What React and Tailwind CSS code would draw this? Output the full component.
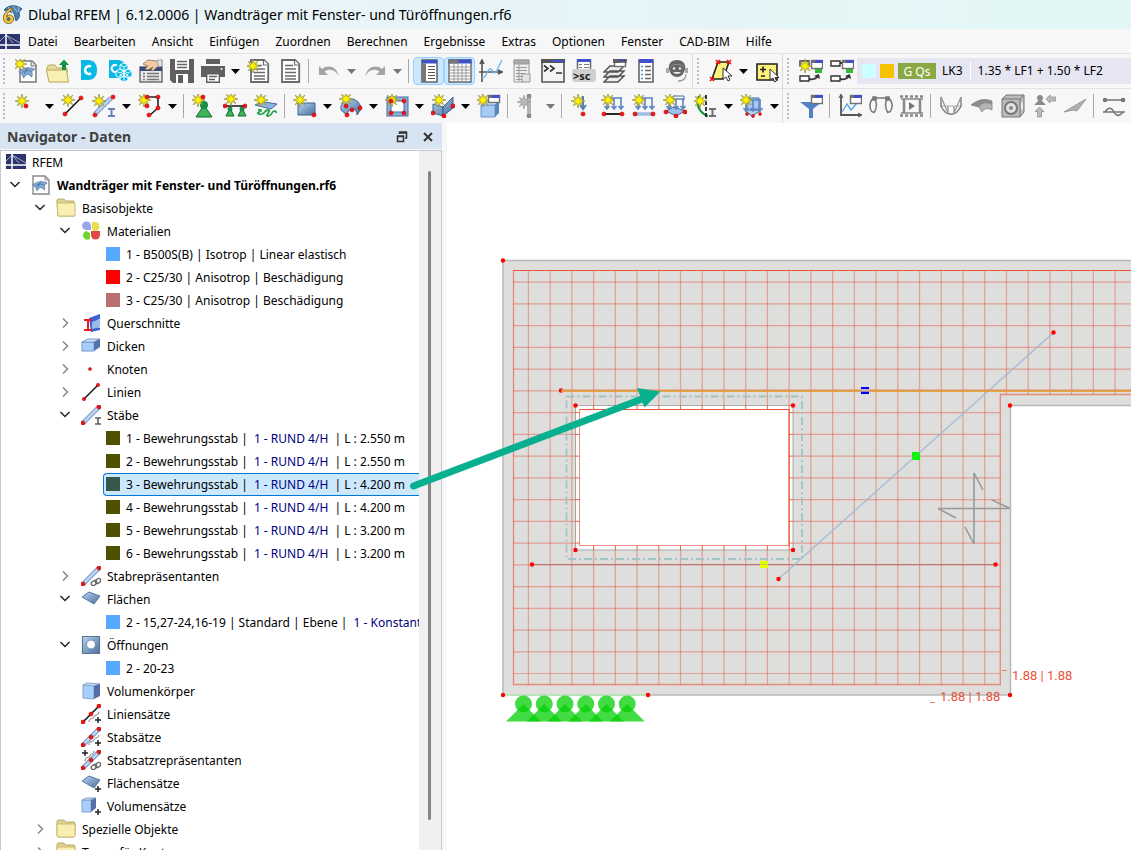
import { useState } from 'react'

const STAR = 'M0-7L1.2-2.4 4.8-4.8 2.5-1.2 7 0 2.5 1.2 4.8 4.8 1.2 2.4 0 7-1.2 2.4-4.8 4.8-2.5 1.2-7 0-2.5-1.2-4.8-4.8-1.2-2.4Z'

function Star({ x = 6, y = 6, off }) {
  return <path d={STAR} transform={`translate(${x} ${y})`} fill={off ? '#b8b8b8' : '#fff000'} stroke={off ? '#999' : '#8f8b45'} strokeWidth="0.7" />
}

function Dot({ x, y, r = 2.1, off }) {
  return <circle cx={x} cy={y} r={r} fill={off ? '#8a8a8a' : '#f01414'} stroke={off ? '#777' : '#b40000'} strokeWidth="0.5" />
}

// small window with a blue caption bar
function Win({ x = 11, y = 0, w = 12, h = 9, bar = '#4050c8' }) {
  return (
    <g>
      <rect x={x + 0.5} y={y + 0.5} width={w - 1} height={h - 1} fill="#fff" stroke="#707070" strokeWidth="1.4" />
      <rect x={x} y={y} width={w} height="3" fill={bar} />
      <path d={`M${x} ${y}h4v3h-4z`} fill="#707070" />
    </g>
  )
}

function Page() {
  return (
    <g fill="#fff" stroke="#6a6a6a" strokeWidth="1.8">
      <path d="M4 1H17l4.200 4.200V23H4z" />
      <path d="M7 6.500h8M7 10h11M7 13.500h11M7 17h11M7 20h11" strokeWidth="1.400" />
      <path d="M16.500 1v5h5" strokeWidth="1.200" />
    </g>
  )
}

function DownArrows({ y = 4, bottom = 15 }) {
  return (
    <g fill="none" stroke="#5a86c2" strokeWidth="1.6">
      <path d={`M5 ${y}H21M6 ${y}V${bottom}M13 ${y}V${bottom}M20 ${y}V${bottom}`} />
      <path d={`M3.500 ${bottom - 3}L6 ${bottom}l2.500-3M10.500 ${bottom - 3}L13 ${bottom}l2.500-3M17.500 ${bottom - 3}L20 ${bottom}l2.500-3`} />
    </g>
  )
}

function Shell({ sx = 0, sy = 0 }) {
  return (
    <g transform={`translate(${sx} ${sy})`}>
      <path d="M1 7C6 2 14 1 21 4l-4 3c1 2 1 4 0 7-2-3-4-4-7-3l-3 4-2-5z" fill="#86acd6" stroke="#4d75a8" />
      <path d="M5 8c4-3 8-3 12-1M12 2L8 10" fill="none" stroke="#3f6597" />
    </g>
  )
}

const bridge = (
  <g>
    <rect width="20" height="15" fill="#2c3470" />
    <path d="M0 7L6 1l14 8M6 1l7 8" fill="none" stroke="#c5c8de" strokeWidth="0.800" />
    <path d="M6 0v15M0 11h20" fill="none" stroke="#fff" strokeWidth="1.500" />
  </g>
)

const link = (
  <g fill="none" stroke="#606060" strokeWidth="1.300">
    <rect x="9" y="14" width="6" height="4" rx="2" transform="rotate(-35 12 16)" />
    <rect x="13" y="12" width="6" height="4" rx="2" transform="rotate(-35 16 14)" />
  </g>
)

const bar = (
  <g>
    <path d="M2 18L18 2" stroke="#5b7fb5" strokeWidth="4.500" />
    <path d="M2 18L18 2" stroke="#b9d4f5" strokeWidth="2.800" />
  </g>
)

const ICONS = {
  newModel: <g><path d="M5 2h12l4 4v17H5z" fill="#fff" stroke="#777" strokeWidth="1.500" /><path d="M16 2v5h5" fill="#ddd" stroke="#777" /><g transform="translate(3 7) scale(.8)"><Shell /></g><Star x={5} y={5} /></g>,
  open: <g><path d="M1 8l2-2h6l2 3h10v4H1z" fill="#e8dd98" stroke="#b5a95a" /><path d="M0.500 11h20l2 12H3z" fill="#f8efb5" stroke="#b5a95a" /><path d="M16 11V6h-3l5-5.500 5 5.500h-3v5z" fill="#129447" /></g>,
  cCloud: <g><path d="M4 1h7c6 0 9 4 9 10s-3 10-9 10H4z" fill="#08b8e6" /><path d="M14 7.500a4 4 0 1 0 0 7" fill="none" stroke="#fff" strokeWidth="2.600" /></g>,
  cubes: <g><path d="M1 1h9c5 0 8 4 8 9s-3 9-8 9H1z" fill="#08b8e6" /><path d="M9 6.500a3.500 3.500 0 1 0 0 6" fill="none" stroke="#fff" strokeWidth="2" /><g fill="#08b8e6" stroke="#fff" strokeWidth="0.900"><path d="M16 4l4 2v4l-4 2-4-2V6zM12 10l4 2v5l-4 2-4-2v-5zM20 10l4 2v5l-4 2-4-2v-5zM16 14l4 2v5l-4 2-4-2v-5z" /><path d="M12 6l4 2 4-2M16 8v4M8 12l4 2 4-2 4 2 4-2M12 16l4 2 4-2M16 18v5" fill="none" /></g></g>,
  hand: <g><rect x="1" y="8" width="22" height="15" fill="#e9e9e9" stroke="#666" strokeWidth="1.400" /><path d="M1 8h22v4H1z" fill="#38487e" /><path d="M4 14.500h2M4 17.500h2M4 20.500h2M8 14.500h12M8 17.500h12M8 20.500h12" stroke="#777" strokeWidth="1.500" /><path d="M4 5l5-4 8 1 6-1v6l-5 1-4 4-2-1 2-3-5 3-3-1 3-3-3-1z" fill="#f3c9a3" stroke="#8c6a50" strokeWidth="0.800" /><path d="M18 1h5v6l-3 1z" fill="#d6e4f5" stroke="#8090a5" strokeWidth="0.600" /></g>,
  save: <g><path d="M0 0h24v24H3l-3-3z" fill="#5f5f5f" /><path d="M5 0h14v11H5zM6 15h12v9H6z" fill="#fff" /><path d="M7 2.500h10M7 5.500h10M7 8.500h10" stroke="#666" strokeWidth="1.400" /><path d="M8 16h5v8H8z" fill="#5f5f5f" /></g>,
  print: <g fill="#5f5f5f"><path d="M5 0h14v5H5zM0 7h24v11h-5v-4H5v4H0z" /><path d="M5.700 14.700h12.600v8.600H5.700z" fill="#fff" stroke="#5f5f5f" strokeWidth="1.400" /><path d="M8 17.500h8M8 20.500h6" stroke="#5f5f5f" strokeWidth="1.400" /><circle cx="20.500" cy="10" r="1" fill="#fff" /></g>,
  newPage: <g><Page /><Star x={6} y={7} /></g>,
  page: <Page />,
  undo: <path d="M2 7v9h9l-3.500-3.500c5-3.500 11-2 14 4.500C20 8 12 5 5 10z" fill="#a3a3a3" />,
  redo: <path d="M22 7v9h-9l3.500-3.500c-5-3.500-11-2-14 4.500C4 8 12 5 19 10z" fill="#a3a3a3" />,
  panelList: <g><path d="M5 1h15v22H5z" fill="#fff" stroke="#666" strokeWidth="1.600" /><path d="M5 1h15v3.500H5z" fill="#3d50c8" /><path d="M5 4.500h4V23H5z" fill="#777" /><path d="M11 7.500h7M11 10.500h7M11 13.500h7M11 16.500h7M11 19.500h7" stroke="#555" strokeWidth="1.200" /></g>,
  table: <g><path d="M1 1h22v22H1z" fill="#fff" stroke="#666" strokeWidth="1.400" /><path d="M0.500 0.500h23v4h-23z" fill="#3d50c8" /><path d="M0.500 0.500h10v4h-10z" fill="#777" /><path d="M1 8h22M1 11h22M1 14h22M1 17h22M1 20h22M6 5v18M10 5v18M14 5v18M18 5v18" stroke="#999" /></g>,
  graph: <g fill="none"><path d="M3 23V2M1 5l2-4 2 4M0 13h23M19 11l4 2-4 2" stroke="#555" strokeWidth="1.600" /><path d="M3 19c5 0 5-9 8-9s3 6 6 3l6-12" stroke="#6fb6ee" strokeWidth="1.300" /></g>,
  doc: <g stroke="#9a9a9a"><path d="M4 1h15v14l-4 8H4z" fill="#eee" /><path d="M4 1h15v4H4z" fill="#aaa" /><path d="M6 8.500h11M6 11.500h11M6 14.500h9M6 17.500h8M6 20.500h6M9 5v17" /><path d="M12 15h8v8h-8z" fill="#e4e4e4" /></g>,
  console: <g><path d="M1 1h22v22H1z" fill="#f4f4f4" stroke="#555" strokeWidth="1.600" /><path d="M0 0h24v4H0z" fill="#555" /><path d="M10 1h13v2H10z" fill="#4050c8" /><path d="M3 6.500l4 3-4 3M9 6.500l4 3-4 3M15 14h6" fill="none" stroke="#333" strokeWidth="1.600" /></g>,
  script: <g><path d="M5.500 1h13v12h-13z" fill="#fff" stroke="#666" strokeWidth="1.500" /><path d="M5 0h14v3H5z" fill="#4050c8" /><path d="M7 5.500h3M12 5.500h5M7 8.500h3M12 8.500h5" stroke="#777" /><rect x="0" y="10" width="24" height="13" rx="3" fill="#cfcfcf" /><text x="1" y="21" fontSize="11" fontWeight="700" fill="#222">&gt;sc</text></g>,
  layers: <g fill="#eee" stroke="#555" strokeWidth="1.500"><path d="M1 23l6-6h14l-6 6zM1 18l6-6h14l-6 6zM1 13l6-6h14l-6 6z" /><Win x={11} y={0} w={12} h={8} /></g>,
  list2: <g><path d="M5 1h14v22H5z" fill="#fff" stroke="#666" strokeWidth="1.600" /><path d="M5 0h14v4H5z" fill="#4050c8" /><path d="M7 7.500h2M7 11.500h2M7 15.500h2M7 19.500h2" stroke="#4b8ad0" strokeWidth="1.600" /><path d="M11 7.500h6M11 11.500h6M11 15.500h6M11 19.500h6" stroke="#666" strokeWidth="1.400" /></g>,
  support: <g><path d="M12 1c6 0 9 4 8 9-1 5-4 8-8 8s-7-3-8-8c-1-5 2-9 8-9z" fill="#666" /><path d="M5 8c3-3 10-4 14 0" fill="none" stroke="#909090" /><circle cx="9" cy="9.500" r="1.200" fill="#eee" /><circle cx="15" cy="9.500" r="1.200" fill="#eee" /><path d="M8 13c2 2.500 6 2.500 8 0z" fill="#eee" /><path d="M2.500 9v5M21.500 9v5" stroke="#aaa" strokeWidth="3" /><path d="M21 15c0 5-3 7-8 7" fill="none" stroke="#999" strokeWidth="1.300" /></g>,
  select: <g><path d="M3 20L9 3h11l-6 17z" fill="#fff07a" stroke="#222" strokeWidth="1.600" /><path d="M1 18l4 4M5 18l-4 4M7 1l4 4M11 1L7 5M18 1l4 4M22 1l-4 4" stroke="#f01414" strokeWidth="1.600" /><path d="M14 9v11l3-2 2 4 2-1-2-4h4z" fill="#fff" stroke="#333" /></g>,
  plusMinus: <g><path d="M2 5h20v16H2z" fill="#fff27a" stroke="#222" strokeWidth="1.600" /><path d="M5 10.500h6M8 7.500v6M6 17h4" stroke="#222" strokeWidth="1.600" /><path d="M15 10v11l3-2 1.500 4 2-1-1.500-3.500h4z" fill="#fff" stroke="#333" /></g>,
  loadNew: <g><path d="M1 2h9v5H1zM1 17h9v5H1z" fill="#fff" stroke="#333" strokeWidth="1.400" /><path d="M10 20c5 1 8-1 9-4" fill="none" stroke="#333" strokeWidth="1.800" /><path d="M15 17l5-2 1 5z" fill="#333" /><path d="M16 10h7v4h-7z" fill="#2dc02d" /><Win x={12} y={1} w={12} h={9} /><Star x={6} y={7} /></g>,
  loadEdit: <g><path d="M1 2h9v5H1zM1 17h9v5H1z" fill="#fff" stroke="#333" strokeWidth="1.400" /><path d="M10 20c5 1 8-1 9-4M10 4h4" fill="none" stroke="#333" strokeWidth="1.800" /><path d="M15 17l5-2 1 5z" fill="#333" /><path d="M16 10h7v4h-7z" fill="#2dc02d" /><Win x={12} y={1} w={12} h={9} /></g>,

  node: <g><Star x={7} y={7} /><Dot x={11} y={12} /></g>,
  line: <g><path d="M4 20L20 4" stroke="#111" strokeWidth="1.600" /><Star x={7} y={6} /><Dot x={4} y={20} /><Dot x={20} y={4} /></g>,
  member: <g><g transform="translate(1 2)">{bar}</g><Star x={7} y={7} /><Dot x={3} y={21} /><Dot x={21} y={3} /><path d="M16 15h7M19.500 15v7M16 22h7" stroke="#6b83b8" strokeWidth="2" /></g>,
  polyline: <g><path d="M8 3h12v11l-8 7" fill="none" stroke="#222" strokeWidth="1.600" /><Star x={6} y={6} /><Dot x={9} y={3} /><Dot x={20} y={3} /><Dot x={20} y={14} /><Dot x={11} y={21} /><Dot x={9} y={12} /></g>,
  nodeSup: <g><path d="M12 11l8 12H4z" fill="#3cb45a" stroke="#126b2d" /><circle cx="12" cy="11" r="4" fill="#189048" /><Star x={6} y={6} /><Dot x={11} y={3} /></g>,
  lineSup: <g><path d="M7 14l4 8H3zM19 14l4 8h-8z" fill="#3cb45a" stroke="#126b2d" /><circle cx="7" cy="15" r="2.500" fill="#189048" /><circle cx="19" cy="15" r="2.500" fill="#189048" /><path d="M3 12h19" stroke="#222" strokeWidth="1.600" /><Star x={8} y={5} /><Dot x={2} y={12} /><Dot x={22} y={12} /></g>,
  surfSup: <g><path d="M1 11l9-3 13 2-6 5z" fill="#8fb3dd" stroke="#44699c" /><path d="M4 16c4-1 4 1 1 2s0 3 3 2 3-4 6-4 0 3-1 5 4 1 5-2 5-2 4 0" fill="none" stroke="#28a04a" strokeWidth="1.800" /><Star x={7} y={6} /></g>,
  surface: <g><path d="M5 9h17v12H5z" fill="url(#blueG)" stroke="#3d628f" /><Star x={7} y={6} /><Dot x={21} y={21} /></g>,
  shell: <g><path d="M2 12C6 3 18 2 22 13v2l-4 6c0-4-2-6-5-6s-4 3-5 6l-6-5z" fill="url(#blueG)" stroke="#3d628f" /><Star x={7} y={5} /><Dot x={7} y={12} /><Dot x={13} y={16} /><Dot x={8} y={21} /><Dot x={21} y={14} /></g>,
  opening: <g><path d="M4 5h17v15H4z" fill="#fff" stroke="#486f9f" strokeWidth="5" /><path d="M4 5h17v15H4z" fill="none" stroke="#8db0d8" strokeWidth="3" /><Star x={7} y={6} /><Dot x={6} y={7} /><Dot x={19} y={7} /><Dot x={6} y={19} /><Dot x={19} y={19} /></g>,
  folded: <g><path d="M2 10l10 3v9L2 19zM12 13L22 3v11l-10 8z" fill="url(#blueG)" stroke="#3d628f" /><Star x={8} y={6} /><Dot x={2} y={19} /><Dot x={13} y={22} /><Dot x={22} y={12} /></g>,
  solid: <g><path d="M4 11h14v12H4z" fill="#a5ccf5" stroke="#6d93c0" /><path d="M4 11l4-4h14l-4 4z" fill="#cde3fa" stroke="#6d93c0" /><path d="M18 11l4-4v12l-4 4z" fill="#5d84b7" /><Star x={6} y={6} /><Win x={11} y={1} w={12} h={8} /></g>,
  rebarOff: <g><path d="M13 2v20" stroke="#b5b5b5" strokeWidth="4" /><Dot off x={13} y={2} /><Dot off x={13} y={22} /><Star x={8} y={8} off /></g>,
  nodalLoad: <g><path d="M13 2v12M10 11l3 4 3-4" fill="none" stroke="#4f7fc0" strokeWidth="2" /><Star x={8} y={7} /><Dot x={13} y={20} /></g>,
  lineLoad: <g><DownArrows /><path d="M3 20h18" stroke="#111" strokeWidth="1.800" /><Star x={7} y={6} /><Dot x={3} y={20} /><Dot x={21} y={20} /></g>,
  memberLoad: <g><DownArrows /><path d="M3 20h18" stroke="#9fbde5" strokeWidth="3.500" /><Star x={7} y={6} /><Dot x={3} y={20} /><Dot x={21} y={20} /></g>,
  surfLoad: <g><path d="M3 17l8-4 11 4-9 5z" fill="#9fc0ea" stroke="#41699b" /><DownArrows y={5} bottom={15} /><path d="M5 5l6-3h10v4" fill="none" stroke="#446da3" /><Star x={7} y={6} /><Dot x={3} y={18} /><Dot x={22} y={18} /><Dot x={13} y={22} /></g>,
  imperf: <g><path d="M5 2c-4 7 0 17 9 20" fill="none" stroke="#129436" strokeWidth="2" /><path d="M12 1v22" stroke="#222" strokeWidth="1.800" strokeDasharray="4 2" /><path d="M15 15h7M18.500 15v7M15 22h7" stroke="#707070" strokeWidth="2" /><Star x={6} y={7} /></g>,
  volLoad: <g><path d="M5 17l7-3 8 3-8 5z" fill="#b5cdea" stroke="#41699b" /><path d="M7 4h12v12H7z" fill="#a9c9ef" stroke="#3f6ba5" /><DownArrows y={6} bottom={17} /><Star x={6} y={6} /><Dot x={7} y={20} r={1.500} /><Dot x={13} y={22} r={1.500} /><Dot x={20} y={20} r={1.500} /></g>,
  filter: <g><path d="M1 8h22l-9 7v9h-4v-9z" fill="#5183c4" /><Win x={12} y={1} w={12} h={9} /></g>,
  diagram: <g><path d="M3 1v20h20" fill="none" stroke="#555" strokeWidth="1.800" /><path d="M4 18l5-8 4 6 6-7" fill="none" stroke="#58a8ea" strokeWidth="1.400" /><path d="M1 4l2-4 2 4M20 19l4 2-4 2" fill="none" stroke="#555" /><Win x={12} y={1} w={12} h={9} /></g>,
  deform: <g fill="none" stroke="#777" strokeWidth="1.500"><path d="M5 4h14M6 5c2 4 2 9-1 14M18 5c-2 4-2 9 1 14M4 4C0 8 0 14 3 18M20 4c4 4 4 10 1 14" /><path d="M4 3h3v3H4zM17 3h3v3h-3zM3 18h3M18 18h3" fill="#777" /></g>,
  film: <g fill="none" stroke="#888"><path d="M1 5h22M1 19h22" strokeWidth="1.300" /><path d="M0 2.500h24M0 21.500h24" strokeWidth="2.500" strokeDasharray="3 2" /><path d="M4 5v14M20 5v14" strokeWidth="2.500" /><path d="M9 8v8l6-4z" fill="#777" stroke="none" /></g>,
  moment: <g><path d="M1 12h22" stroke="#aaa" /><path d="M2 3v9c5 11 15 11 20 0V3" fill="none" stroke="#7d7d7d" strokeWidth="1.400" /><path d="M2 3l7 16M22 3l-7 16M9 12v7M15 12v7" fill="none" stroke="#999" strokeWidth="1.300" /></g>,
  surfRes: <g><path d="M1 11C7 6 14 4 22 7v9c-4-2-8-2-10 2l-3-5z" fill="#b4b4b4" stroke="#999" /><path d="M1 11C7 6 14 4 22 7v4c-6-3-10-2-13 2z" fill="#8c8c8c" /></g>,
  solidRes: <g><path d="M1 5l4-4h18v17l-4 5H1z" fill="#bbb" stroke="#777" /><path d="M1 5h18v18M19 5l4-4" fill="none" stroke="#777" /><circle cx="10" cy="14" r="6" fill="#e3e3e3" stroke="#777" strokeWidth="2" /><circle cx="10" cy="14" r="2" fill="#888" /><ellipse cx="21" cy="12" rx="1" ry="4" fill="#eee" /></g>,
  reaction: <g fill="#8b8b8b"><circle cx="8" cy="4" r="3" /><path d="M8 5l6 6H2z" /><path d="M7.500 13l4.500 4.500H9.500V23h-4v-5.500H3z" fill="#bbb" stroke="#888" strokeWidth="0.700" /><path d="M14 5l4-4v2h6v4h-6v2z" fill="#bbb" stroke="#888" strokeWidth="0.700" /></g>,
  wedge: <path d="M1 18L23 5l-9 12-4-1z" fill="#b0b0b0" stroke="#999" />,
  sections: <g fill="none" stroke="#777" strokeWidth="1.600"><path d="M2 6h20M1 18h22" /><path d="M3 18c4-6 7-4 9 0s5 5 9 0" /><circle cx="3" cy="6" r="1.500" fill="#777" /><circle cx="21" cy="6" r="1.500" fill="#777" /></g>,

  rfem: bridge,
  modelFile: <g><path d="M2 1h12l4 4v14H2z" fill="#fff" stroke="#888" strokeWidth="1.400" /><path d="M14 1v4h4" fill="none" stroke="#888" /><g transform="translate(1 5) scale(.72)"><Shell /></g></g>,
  folderOpen: <g><path d="M1 4V2l1-1h6l1.500 2H18v15H2z" fill="#ddd28e" stroke="#b8ad68" /><path d="M1 5h18v13H2z" fill="#faf0b5" stroke="#c8bc70" /></g>,
  folder: <g><path d="M1 4V2l1-1h6l1.500 2H18l1 1v13l-1 1H2l-1-1z" fill="#ddd28e" stroke="#b8ad68" /><path d="M1 5h18v12l-1 1H2l-1-1z" fill="#f8eeb2" stroke="#c8bc70" /></g>,
  materials: <g><path d="M1 5a4.500 4.500 0 1 1 9 0v4H6a4.500 4.500 0 0 1-5-4z" fill="#9aa5ea" /><path d="M11 1h3a4.500 4.500 0 1 1 0 9c-3 0-3-2-3-4z" fill="#e6e051" /><path d="M5 10a4.500 4.500 0 1 0 4 8V12z" fill="#6bd925" /><path d="M10 10h9v4a4.500 4.500 0 0 1-9 0z" fill="#e34848" /></g>,
  crossSec: <g><path d="M8 5l11-4v5l-3 1v7l3 1v2l-9 2z" fill="#3d60d4" /><path d="M11 9l8-3v8l-8 2z" fill="#99bdea" /><path d="M3 7h8M7 7v10M3 17h8" stroke="#e02020" strokeWidth="2" fill="none" /></g>,
  thickness: <g><path d="M1 6h12v9H1z" fill="#a7cffc" stroke="#7398c8" /><path d="M1 6l6-3h12l-6 3z" fill="#d3e7fc" stroke="#7398c8" /><path d="M13 6l6-3v8l-6 4z" fill="#5374aa" /></g>,
  nodes: <Dot x={9} y={10} r={1.500} />,
  lines: <g><path d="M3 17L17 3" stroke="#111" strokeWidth="1.500" /><Dot x={3} y={17} r={1.700} /><Dot x={17} y={3} r={1.700} /></g>,
  members: <g>{bar}<Dot x={2} y={18} /><Dot x={18} y={2} /><path d="M14 13h6M17 13v6M14 19h6" stroke="#606060" strokeWidth="1.600" /></g>,
  memberRep: <g>{bar}<Dot x={2} y={18} /><Dot x={18} y={2} /><g transform="translate(1 1)">{link}</g></g>,
  surfaces: <path d="M1 8l7-5 11 4-6 8z" fill="url(#blueG)" stroke="#5b7ba6" />,
  openings: <g><path d="M1.500 1.500h17v17h-17z" fill="url(#blueG)" stroke="#63758a" strokeWidth="1.200" /><circle cx="10" cy="9.500" r="4.500" fill="#fff" stroke="#728ba8" /></g>,
  solids: <g><path d="M2 4h11v14l-11-1z" fill="#a7cffc" stroke="#7fa4cf" /><path d="M2 4l4-2 13 1-6 2z" fill="#c9def5" stroke="#7fa4cf" /><path d="M13 5l6-2v12l-6 3z" fill="#566ea8" /></g>,
  lineSets: <g><path d="M2 18L18 2" stroke="#111" strokeWidth="1.600" /><Dot x={2} y={18} /><Dot x={10} y={10} /><Dot x={18} y={2} /><path d="M8 18c0-5 4-2 5-5s4-1 5-5" fill="none" stroke="#777" /><path d="M14 16h6M17 13v6" stroke="#222" strokeWidth="1.500" /></g>,
  memberSets: <g>{bar}<Dot x={2} y={18} /><Dot x={10} y={10} /><Dot x={18} y={2} /><path d="M8 18c0-5 4-2 5-5s4-1 5-5" fill="none" stroke="#777" /><path d="M14 16h6M17 13v6" stroke="#222" strokeWidth="1.500" /></g>,
  memberSetRep: <g>{bar}<Dot x={2} y={18} /><Dot x={10} y={10} /><Dot x={18} y={2} /><path d="M1 3h6M4 0v6" stroke="#222" strokeWidth="1.500" /><path d="M4 11c1-6 5-2 5-5s4-1 4-5" fill="none" stroke="#777" /><g transform="translate(1 1)">{link}</g></g>,
  surfaceSets: <g><path d="M1 8l7-5 11 4-6 8z" fill="url(#blueG)" stroke="#5b7ba6" /><path d="M14 16h6M17 13v6" stroke="#222" strokeWidth="1.500" /></g>,
  solidSets: <g><path d="M1 4h9v12H1z" fill="#a7cffc" stroke="#7fa4cf" /><path d="M1 4l4-2h10l-5 2z" fill="#c9def5" stroke="#7fa4cf" /><path d="M10 4l5-2v10l-5 4z" fill="#566ea8" /><path d="M14 16h6M17 13v6" stroke="#222" strokeWidth="1.500" /></g>,
}

// '|' is a divider, '*' adds the drop-down arrow, '-' greys it, '!' is a pressed button
const ROW1 = [
  ['newModel', 'open', 'cCloud', 'cubes', 'hand', 'save', 'print*', 'newPage', 'page', '|', 'undo*-', 'redo*-', '|', 'panelList!', 'table!', 'graph', 'doc', 'console', 'script', 'layers', 'list2', 'support'],
  ['select*', 'plusMinus'],
  ['loadNew', 'loadEdit'],
]
const ROW2 = [
  ['node*', 'line', 'member*', 'polyline*', '|', 'nodeSup', 'lineSup', 'surfSup', '|', 'surface*', 'shell*', 'opening*', 'folded*', 'solid', '|', 'rebarOff*-', '|', 'nodalLoad', 'lineLoad', 'memberLoad', 'surfLoad', 'imperf*', 'volLoad*'],
  ['filter', '|', 'diagram', 'deform', 'film', '|', 'moment', 'surfRes', 'solidRes', 'reaction', 'wedge', '|', 'sections'],
]

const MENU = ['Datei', 'Bearbeiten', 'Ansicht', 'Einfügen', 'Zuordnen', 'Berechnen', 'Ergebnisse', 'Extras', 'Optionen', 'Fenster', 'CAD-BIM', 'Hilfe']

const bars = ['2.550', '2.550', '4.200', '4.200', '3.200', '3.200']

const TREE = [
  { level: 0, icon: 'modelFile', label: 'Wandträger mit Fenster- und Türöffnungen.rf6', open: true, bold: true },
  { level: 1, icon: 'folderOpen', label: 'Basisobjekte', open: true },
  { level: 2, icon: 'materials', label: 'Materialien', open: true },
  { color: 'bg-[#55aaff]', label: '1 - B500S(B) | Isotrop | Linear elastisch' },
  { color: 'bg-[#ff0000]', label: '2 - C25/30 | Anisotrop | Beschädigung' },
  { color: 'bg-[#b87070]', label: '3 - C25/30 | Anisotrop | Beschädigung' },
  { level: 2, icon: 'crossSec', label: 'Querschnitte', open: false },
  { level: 2, icon: 'thickness', label: 'Dicken', open: false },
  { level: 2, icon: 'nodes', label: 'Knoten', open: false },
  { level: 2, icon: 'lines', label: 'Linien', open: false },
  { level: 2, icon: 'members', label: 'Stäbe', open: true },
  ...bars.map((len, i) => ({ bar: i + 1, color: 'bg-[#4f5000]', label: `${i + 1} - Bewehrungsstab | `, blue: '1 - RUND 4/H', tail: ` | L : ${len} m` })),
  { level: 2, icon: 'memberRep', label: 'Stabrepräsentanten', open: false },
  { level: 2, icon: 'surfaces', label: 'Flächen', open: true },
  { color: 'bg-[#55aaff]', label: '2 - 15,27-24,16-19 | Standard | Ebene | ', blue: '1 - Konstant' },
  { level: 2, icon: 'openings', label: 'Öffnungen', open: true },
  { color: 'bg-[#55aaff]', label: '2 - 20-23' },
  { level: 2, icon: 'solids', label: 'Volumenkörper' },
  { level: 2, icon: 'lineSets', label: 'Liniensätze' },
  { level: 2, icon: 'memberSets', label: 'Stabsätze' },
  { level: 2, icon: 'memberSetRep', label: 'Stabsatzrepräsentanten' },
  { level: 2, icon: 'surfaceSets', label: 'Flächensätze' },
  { level: 2, icon: 'solidSets', label: 'Volumensätze' },
  { level: 1, icon: 'folder', label: 'Spezielle Objekte', open: false },
  { level: 1, icon: 'folder', label: 'Typen für Knoten', open: false },
]

const INDENT = ['pl-0', 'pl-[25px]', 'pl-[50px]']

function ToolGroup({ items }) {
  return (
    <div className="flex h-full shrink-0 items-center">
      <div className="ml-1 mr-[6px] h-[26px] w-0 border-l-2 border-dotted border-[#bdbdbd]" />
      {items.map((item, i) => {
        if (item === '|') return <div key={i} className="ml-[3px] mr-1 h-6 w-px bg-[#a8a8a8]" />
        const name = item.replace(/[*!-]/g, '')
        const active = item.includes('!')
        return (
          <div key={i} className="flex items-center">
            <button aria-label={name} className={`flex h-7 w-[31px] items-center justify-center rounded-sm ${active ? 'border border-[#99d1ff] bg-[#cce8ff]' : ''}`}>
              <svg className="h-6 w-6 shrink-0" viewBox="0 0 24 24">{ICONS[name]}</svg>
            </button>
            {item.includes('*') && (
              <button aria-label={`${name} Menü`} className="flex h-7 w-[15px] items-center justify-center">
                <svg className="h-[5px] w-[9px]" viewBox="0 0 9 5"><path d="M0 0h9L4.500 5z" fill={item.includes('-') ? '#777' : '#000'} /></svg>
              </button>
            )}
          </div>
        )
      })}
    </div>
  )
}

function Chevron({ open }) {
  return (
    <svg className="h-3 w-3" viewBox="0 0 12 12" fill="none" strokeWidth="1.500">
      {open ? <path d="M1.500 3L6 7.500 10.500 3" stroke="#222" /> : <path d="M4 1.500L8.500 6 4 10.500" stroke="#888" />}
    </svg>
  )
}

function TreeRow({ row, selected, onSelect }) {
  if (row.level === undefined) {
    return (
      <li className="h-[23px] pl-[101px]">
        <button
          onClick={onSelect}
          className={`flex h-full w-full items-center whitespace-pre border-y border-l pl-[2px] text-left ${selected ? 'rounded-l-sm border-[#0078d7] bg-[#cce8ff]' : 'border-transparent'}`}
        >
          <span className={`mb-[2px] mr-[6px] h-[14px] w-[14px] shrink-0 ${selected ? 'bg-[#36594b]' : row.color}`} />
          {row.label}
          {row.blue && <span className="mx-[3px] text-[#00007f]">{row.blue}</span>}
          {row.tail}
        </button>
      </li>
    )
  }
  return (
    <li className={`flex h-[23px] items-center ${INDENT[row.level]}`}>
      <button aria-label={`${row.label} auf/zu`} className="flex h-full w-[25px] shrink-0 items-center justify-center pb-[2px]">
        {row.open !== undefined && <Chevron open={row.open} />}
      </button>
      <button className={`flex h-full items-center whitespace-nowrap ${row.bold ? 'font-bold' : ''}`}>
        <span className="flex w-[30px] justify-center pb-[2px] pr-[2px]">
          <svg className="h-5 w-5" viewBox="0 0 20 20">{ICONS[row.icon]}</svg>
        </span>
        {row.label}
      </button>
    </li>
  )
}

function Navigator() {
  const [selected, setSelected] = useState(3)
  return (
    <aside className="flex w-[442px] shrink-0 flex-col">
      <header className="flex h-[26px] shrink-0 items-center bg-[#d7e5f2] pl-[7px] pr-2 pt-px">
        <h2 className="flex-1 text-sm font-bold text-[#404040]">Navigator - Daten</h2>
        <button aria-label="Abdocken" className="mr-[14px]">
          <svg className="h-3 w-3" viewBox="0 0 12 12" fill="none" stroke="#333"><path d="M3.500 3V1h7v6H9M3 2h8" strokeWidth="1.500" /><path d="M1.500 5h6v5.500h-6zM1 5.500h7" strokeWidth="1.500" /></svg>
        </button>
        <button aria-label="Schließen">
          <svg className="h-3 w-3" viewBox="0 0 12 12" stroke="#333" strokeWidth="2"><path d="M2 2l8 8M10 2l-8 8" /></svg>
        </button>
      </header>
      <div className="mt-px flex min-h-0 flex-1 border-x border-t border-[#c6c6d2] bg-white pl-px">
        <ul className="min-w-0 flex-1 overflow-hidden text-xs text-black">
          <li className="flex h-[23px] items-center pl-1">
            <svg className="mb-[2px] h-[15px] w-5" viewBox="0 0 20 15">{ICONS.rfem}</svg>
            <span className="ml-[6px]">RFEM</span>
          </li>
          {TREE.map((row, i) => (
            <TreeRow key={i} row={row} selected={row.bar !== undefined && row.bar === selected} onSelect={() => row.bar && setSelected(row.bar)} />
          ))}
        </ul>
        <div className="flex w-[22px] shrink-0 bg-[#f0f0f0] pb-[30px] pl-[9px] pt-5">
          <div className="w-[3px] rounded-sm bg-[#858585]" />
        </div>
      </div>
    </aside>
  )
}

const gridX = Array.from({ length: 29 }, (_, i) => 528.4 + i * 21.73)
const gridY = Array.from({ length: 19 }, (_, i) => 282.2 + i * 21.74)
const NODES = [
  [503, 260.5], [503, 695], [648, 695], [1010, 695], [1010, 405.5], [1053.5, 332.5], [778.5, 579],
  [532, 564.5], [995.5, 564.5], [575.5, 405.5], [793, 405.5], [575.5, 550], [793, 550], [561, 390.5],
]

function ModelView() {
  return (
    <svg className="h-full w-full" viewBox="447 123 684 727" preserveAspectRatio="xMinYMin slice" fontFamily="Roboto, sans-serif">
      <clipPath id="mesh">
        <path clipRule="evenodd" d="M513 270H1200V395H1000.500V685H513zM575.500 405.500V550H793V405.500z" />
      </clipPath>
      <clipPath id="rim">
        <path clipRule="evenodd" d="M575.500 405.500h217.500v144.500h-217.500zM579.500 409.500v136h209.500v-136z" />
      </clipPath>
      <path d="M503 260.500H1200V405.500H1010.500V695H503z" fill="#dededc" stroke="#b9b9b9" strokeWidth="1.500" />
      <path d="M575.500 405.500h217.500v144.500h-217.500z" fill="#fff" stroke="#a8a8a8" />
      <g clipPath="url(#mesh)" stroke="#e8533a" strokeOpacity=".45" strokeWidth="1.200">
        {gridX.map((x) => <path key={x} d={`M${x} 270V685`} />)}
        {gridY.map((y) => <path key={y} d={`M513 ${y}H1200`} />)}
      </g>
      <g clipPath="url(#rim)" stroke="#e8533a" strokeOpacity=".9">
        {gridX.map((x) => <path key={x} d={`M${x} 270V685`} />)}
        {gridY.map((y) => <path key={y} d={`M513 ${y}H1200`} />)}
      </g>
      <path d="M1200 394.500H1000.300V684.500H513.500V270.500" fill="none" stroke="#e8533a" strokeOpacity=".6" strokeWidth="1.300" />
      <path d="M513 270.500H1200" stroke="#e8533a" />
      <path d="M579.500 409.500v136h210" fill="none" stroke="#e8533a" strokeOpacity=".65" />
      <path d="M579.500 409.500h209.500v136" fill="none" stroke="#e8533a" strokeWidth="1.200" />
      <path d="M566.500 396.500H802V559H566.500z" fill="none" stroke="#a2c4c3" strokeWidth="1.800" strokeDasharray="8 3 2 3" />
      <path d="M532 564.500h463.500" stroke="#b87474" />
      <path d="M778.500 579L1053.500 332.500" stroke="#a3bad6" strokeWidth="1.300" />
      <g stroke="#999" strokeWidth="1.600" fill="none">
        <path d="M983 490l-9-17v71l-9-17M956 518l-18-9.500h72l-18-8.500" />
      </g>
      <path d="M503 695h145" stroke="#b4efb0" strokeWidth="1.500" />
      {[0, 1, 2, 3, 4, 5].map((i) => (
        <g key={i} transform={`translate(${523.5 + i * 20.75} 704)`} fill="#04cf04" fillOpacity=".75">
          <circle r="8.500" />
          <path d="M0 0L17.500 17.500H-17.500z" />
        </g>
      ))}
      {NODES.map(([x, y]) => <circle key={`${x}-${y}`} cx={x} cy={y} r="2.200" fill="#f00" />)}
      <path d="M561 390.300h640" stroke="#e0905c" strokeWidth="1.500" />
      <path d="M561 391.300h640" stroke="#e4a32c" />
      <path d="M861 387h8v2h-8zM861 391.500h8v2.500h-8z" fill="#0000f5" />
      <path d="M861 389h8v2.500h-8z" fill="#c9b0c8" />
      <path d="M912 452h8v8h-8z" fill="#00f800" />
      <path d="M912 459.500L920 452.300" stroke="#7fbf8f" />
      <path d="M760 561h8v7h-8z" fill="#e6ff00" />
      <path d="M760 564.500h8" stroke="#d0d040" />
      <g fill="#e8533a" fontSize="13">
        <path d="M1002 670.500h5M930 702.500h5" stroke="#e8533a" strokeOpacity=".7" />
        <text x="1012" y="680">1.88 | 1.88</text>
        <text x="940" y="701">1.88 | 1.88</text>
      </g>
    </svg>
  )
}

export default function App() {
  return (
    <div className="flex h-screen flex-col overflow-hidden bg-[#f7f7f7] font-['Noto_Sans','Segoe_UI',sans-serif] text-black">
      <svg className="absolute h-0 w-0">
        <defs>
          <linearGradient id="blueG" x1="0" y1="0" x2="1" y2="1">
            <stop offset="0" stopColor="#b4d6f6" />
            <stop offset="1" stopColor="#4a6d9c" />
          </linearGradient>
        </defs>
      </svg>

      <header className="flex h-[29px] shrink-0 items-center bg-linear-to-r from-[#eaf3f9] to-[#e3f7f6]">
        <svg className="ml-[2px] mr-[6px] h-5 w-5" viewBox="0 0 20 20">
          <path d="M2 5C7-1 15 0 20 4l-3 3c1 4 0 7-3 9L12 8z" fill="#4f7eaa" stroke="#305879" />
          <path d="M6 2l5 6M11 1l4 6M16 2l1 5" stroke="#a3c4e1" />
          <path d="M9 3C3 6 1 10 1.500 14c.5 6 10 6 10 0 0-5-6-5-7-2 0-3 2-6 6-7z" fill="#f6c84c" stroke="#8c6c1c" />
          <circle cx="6.500" cy="14" r="2" fill="#5a6a62" />
        </svg>
        <h1 className="whitespace-nowrap text-sm">Dlubal RFEM | 6.12.0006 | Wandträger mit Fenster- und Türöffnungen.rf6</h1>
      </header>

      <nav className="flex h-6 shrink-0 items-center pt-px text-xs">
        <svg className="mr-2 h-[15px] w-5" viewBox="0 0 20 15">{ICONS.rfem}</svg>
        <div className="flex gap-4">
          {MENU.map((m) => <button key={m}>{m}</button>)}
        </div>
      </nav>

      <div className="flex h-[35px] shrink-0 border-t border-[#e2e2e2]">
        {ROW1.map((items, i) => (
          <div key={i} className={i ? 'border-l border-[#dadada]' : '-ml-px'}><ToolGroup items={items} /></div>
        ))}
        <button aria-haspopup="listbox" className="my-1 flex flex-1 items-center whitespace-nowrap bg-[#e6e6f2] pl-[5px] text-xs">
          <span className="mr-1 h-[14px] w-[14px] bg-[#ccffff]" />
          <span className="mr-1 h-[14px] w-[14px] bg-[#f7c200]" />
          <span className="mr-[6px] flex h-4 w-[38px] items-center justify-center bg-[#8aa944] pt-px text-white">G Qs</span>
          LK3
          <span className="mx-[7px] h-[18px] w-px bg-white" />
          1.35 * LF1 + 1.50 * LF2
        </button>
      </div>
      <div className="flex h-[35px] shrink-0 border-t border-[#e2e2e2]">
        {ROW2.map((items, i) => (
          <div key={i} className={i ? 'border-l border-[#dadada]' : '-ml-px'}><ToolGroup items={items} /></div>
        ))}
      </div>

      <main className="relative flex min-h-0 flex-1 overflow-hidden">
        <Navigator />
        <section className="ml-[5px] min-w-0 flex-1 bg-white">
          <ModelView />
        </section>
        <svg className="pointer-events-none absolute left-[405px] top-[255px] h-[120px] w-[270px]" viewBox="405 378 270 120">
          <path d="M413.500 486L642 399" stroke="#08b090" strokeWidth="7" strokeLinecap="round" />
          <path d="M637 388L660.500 391.500 644.500 407.500z" fill="#08b090" />
        </svg>
      </main>
    </div>
  )
}
